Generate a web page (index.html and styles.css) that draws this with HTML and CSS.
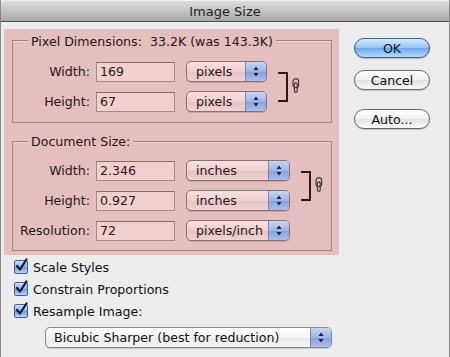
FILE: index.html
```html
<!DOCTYPE html>
<html lang="en">
<head>
    <meta charset="UTF-8">
    <title>Image Size</title>
    <link rel="stylesheet" href="styles.css">
</head>
<body>
    <div class="window">
        <div class="titlebar">Image Size</div>

        <div class="main">
            <div class="left">
                <!-- pink highlight over both size groups -->
                <div class="panel">
                    <div class="group">
                        <div class="group-title">Pixel Dimensions:&nbsp; 33.2K (was 143.3K)</div>
                        <div class="rows">
                            <div class="label">Width:</div>
                            <div class="field">169</div>
                            <div class="popup short">pixels<span class="stepper"><svg width="20" height="19" viewBox="0 0 20 19"><path d="M10 4.5 L12.5 8 L7.5 8 Z M10 14.5 L12.5 11 L7.5 11 Z" fill="#1c2340"/></svg></span></div>
                            <div class="bracket"></div>
                            <div class="link"><svg width="8" height="15" viewBox="0 0 8 15"><rect x="1" y="0.7" width="5.6" height="9" rx="2.8" fill="none" stroke="#4a3a3a" stroke-width="1.2"/><rect x="2.4" y="4.8" width="2.8" height="9.5" rx="1.4" fill="none" stroke="#4a3a3a" stroke-width="1.2"/></svg></div>

                            <div class="label">Height:</div>
                            <div class="field">67</div>
                            <div class="popup short">pixels<span class="stepper"><svg width="20" height="19" viewBox="0 0 20 19"><path d="M10 4.5 L12.5 8 L7.5 8 Z M10 14.5 L12.5 11 L7.5 11 Z" fill="#1c2340"/></svg></span></div>
                        </div>
                    </div>

                    <div class="group second">
                        <div class="group-title">Document Size:</div>
                        <div class="rows">
                            <div class="label">Width:</div>
                            <div class="field">2.346</div>
                            <div class="popup wide">inches<span class="stepper"><svg width="20" height="19" viewBox="0 0 20 19"><path d="M10 4.5 L12.5 8 L7.5 8 Z M10 14.5 L12.5 11 L7.5 11 Z" fill="#1c2340"/></svg></span></div>
                            <div class="bracket"></div>
                            <div class="link"><svg width="8" height="15" viewBox="0 0 8 15"><rect x="1" y="0.7" width="5.6" height="9" rx="2.8" fill="none" stroke="#4a3a3a" stroke-width="1.2"/><rect x="2.4" y="4.8" width="2.8" height="9.5" rx="1.4" fill="none" stroke="#4a3a3a" stroke-width="1.2"/></svg></div>

                            <div class="label">Height:</div>
                            <div class="field">0.927</div>
                            <div class="popup wide">inches<span class="stepper"><svg width="20" height="19" viewBox="0 0 20 19"><path d="M10 4.5 L12.5 8 L7.5 8 Z M10 14.5 L12.5 11 L7.5 11 Z" fill="#1c2340"/></svg></span></div>

                            <div class="label">Resolution:</div>
                            <div class="field">72</div>
                            <div class="popup wide">pixels/inch<span class="stepper"><svg width="20" height="19" viewBox="0 0 20 19"><path d="M10 4.5 L12.5 8 L7.5 8 Z M10 14.5 L12.5 11 L7.5 11 Z" fill="#1c2340"/></svg></span></div>
                        </div>
                    </div>
                </div>

                <div class="options">
                    <div class="check-row"><span class="checkbox"><svg width="14" height="15" viewBox="0 0 14 15"><path d="M3 8 L6 11.5 L12.5 1.5" fill="none" stroke="#151a30" stroke-width="2.2" stroke-linecap="round" stroke-linejoin="round"/></svg></span>Scale Styles</div>
                    <div class="check-row"><span class="checkbox"><svg width="14" height="15" viewBox="0 0 14 15"><path d="M3 8 L6 11.5 L12.5 1.5" fill="none" stroke="#151a30" stroke-width="2.2" stroke-linecap="round" stroke-linejoin="round"/></svg></span>Constrain Proportions</div>
                    <div class="check-row"><span class="checkbox"><svg width="14" height="15" viewBox="0 0 14 15"><path d="M3 8 L6 11.5 L12.5 1.5" fill="none" stroke="#151a30" stroke-width="2.2" stroke-linecap="round" stroke-linejoin="round"/></svg></span>Resample Image:</div>
                    <div class="popup method">Bicubic Sharper (best for reduction)<span class="stepper"><svg width="20" height="19" viewBox="0 0 20 19"><path d="M10 4.5 L12.5 8 L7.5 8 Z M10 14.5 L12.5 11 L7.5 11 Z" fill="#1c2340"/></svg></span></div>
                </div>
            </div>

            <div class="buttons">
                <button class="btn default">OK</button>
                <button class="btn">Cancel</button>
                <button class="btn auto">Auto...</button>
            </div>
        </div>
    </div>
</body>
</html>
```

FILE: styles.css
```css
body {
    margin: 0;
    padding: 0;
    font-family: "DejaVu Sans", sans-serif;
    font-size: 12.6px;
    color: #111;
    background-color: #ececec;
}

.window {
    width: 450px;
    height: 357px;
    box-sizing: border-box;
    border-left: 1px solid #8a8a8a;
    border-right: 1px solid #8a8a8a;
    background-color: #ececec;
    overflow: hidden;
}

.titlebar {
    height: 22px;
    line-height: 21px;
    text-align: center;
    font-size: 13px;
    color: #1e1e1e;
    background: linear-gradient(#dcdcdc, #a9a9a9);
    border-top: 1px solid #f0f0f0;
    border-bottom: 1px solid #505050;
    border-radius: 4px 4px 0 0;
    box-sizing: border-box;
}

.main {
    display: flex;
    padding-top: 7px;
}

.left {
    margin-left: 3px;
    width: 335px;
}

.panel {
    background-color: #e3bfbf;
    padding: 11px 7px 4px 8px;
    color: #2a1616;
}

.group {
    border: 1px solid #a68080;
    box-shadow: inset 0 1px 0 #efd2d2;
    height: 83px;
    box-sizing: border-box;
}

.group.second {
    margin-top: 18px;
    height: 110px;
}

.group-title {
    width: max-content;
    height: 15px;
    line-height: 15px;
    margin: -7px 0 0 15px;
    padding: 0 3px;
    background-color: #e3bfbf;
}

.rows {
    display: grid;
    grid-template-columns: 77px auto auto auto auto;
    grid-auto-rows: 20px;
    justify-content: start;
    row-gap: 10px;
    margin-top: 13px;
}

.group.second .group-title {
    margin-top: -8px;
}

.group.second .rows {
    margin-top: 12px;
}

.label {
    grid-column: 1;
    text-align: right;
    line-height: 20px;
}

.field {
    grid-column: 2;
    margin-left: 6px;
    width: 79px;
    height: 20px;
    box-sizing: border-box;
    border: 1px solid #a58888;
    border-top-color: #8a6c6c;
    background-color: #f2cfcf;
    padding-left: 3px;
    line-height: 18px;
}

.popup {
    position: relative;
    grid-column: 3;
    margin-left: 11px;
    height: 21px;
    margin-top: -1px;
    box-sizing: border-box;
    border: 1px solid #8e6e6e;
    border-radius: 5px;
    background: linear-gradient(#f7e1e1, #efd0d0 50%, #e6c2c2 51%, #efd3d3);
    padding-left: 9px;
    line-height: 19px;
    overflow: hidden;
    box-shadow: 0 1px 0 rgba(120, 80, 80, 0.25);
}

.popup.short {
    width: 81px;
}

.popup.wide {
    width: 104px;
}

.stepper {
    position: absolute;
    top: 0;
    right: 0;
    width: 20px;
    height: 19px;
    border-left: 1px solid #7b86b0;
    background: linear-gradient(#c8d6f2, #9fb4e4 50%, #849fdc 51%, #a9bfee);
}

.stepper svg {
    display: block;
}

.bracket {
    grid-column: 4;
    grid-row: 1 / span 2;
    align-self: center;
    margin-left: 11px;
    width: 10px;
    height: 30px;
    box-sizing: border-box;
    border: 2px solid #3a1414;
    border-left: none;
}

.link {
    grid-column: 5;
    grid-row: 1 / span 2;
    align-self: center;
    margin: -3px 0 0 4px;
}

.link svg {
    display: block;
}

.options {
    padding: 1px 0 0 10px;
}

.check-row {
    display: flex;
    align-items: center;
    height: 22px;
    color: #111;
}

.checkbox {
    position: relative;
    width: 14px;
    height: 14px;
    box-sizing: border-box;
    margin-right: 5px;
    border: 1px solid #44619a;
    border-radius: 2px;
    background: linear-gradient(#cde0f8, #88b0e8 50%, #6d9ce2 51%, #b4d2f6);
}

.checkbox svg {
    position: absolute;
    left: -1px;
    top: -3px;
}

.popup.method {
    margin: 5px 0 0 31px;
    width: 287px;
    border-color: #8a8a8a;
    background: linear-gradient(#ffffff, #f4f4f4 50%, #e8e8e8 51%, #f6f6f6);
    padding-left: 8px;
    color: #111;
    box-shadow: 0 1px 0 rgba(0, 0, 0, 0.15);
}

.buttons {
    display: flex;
    flex-direction: column;
    margin: 9px 0 0 15px;
}

.btn {
    width: 76px;
    height: 20px;
    padding: 0;
    font-family: "DejaVu Sans", sans-serif;
    font-size: 12.6px;
    color: #111;
    border: 1px solid #6a6a6a;
    border-radius: 10px;
    background: linear-gradient(#ffffff, #f2f2f2 50%, #e2e2e2 51%, #f8f8f8);
    box-shadow: 0 1px 1px rgba(0, 0, 0, 0.2);
    margin-bottom: 12px;
}

.btn.default {
    border-color: #3e5c98;
    background: linear-gradient(#d6ebfd, #93c3f3 50%, #6aa8ec 51%, #b3dcfc);
}

.btn.auto {
    margin-top: 7px;
}
```
